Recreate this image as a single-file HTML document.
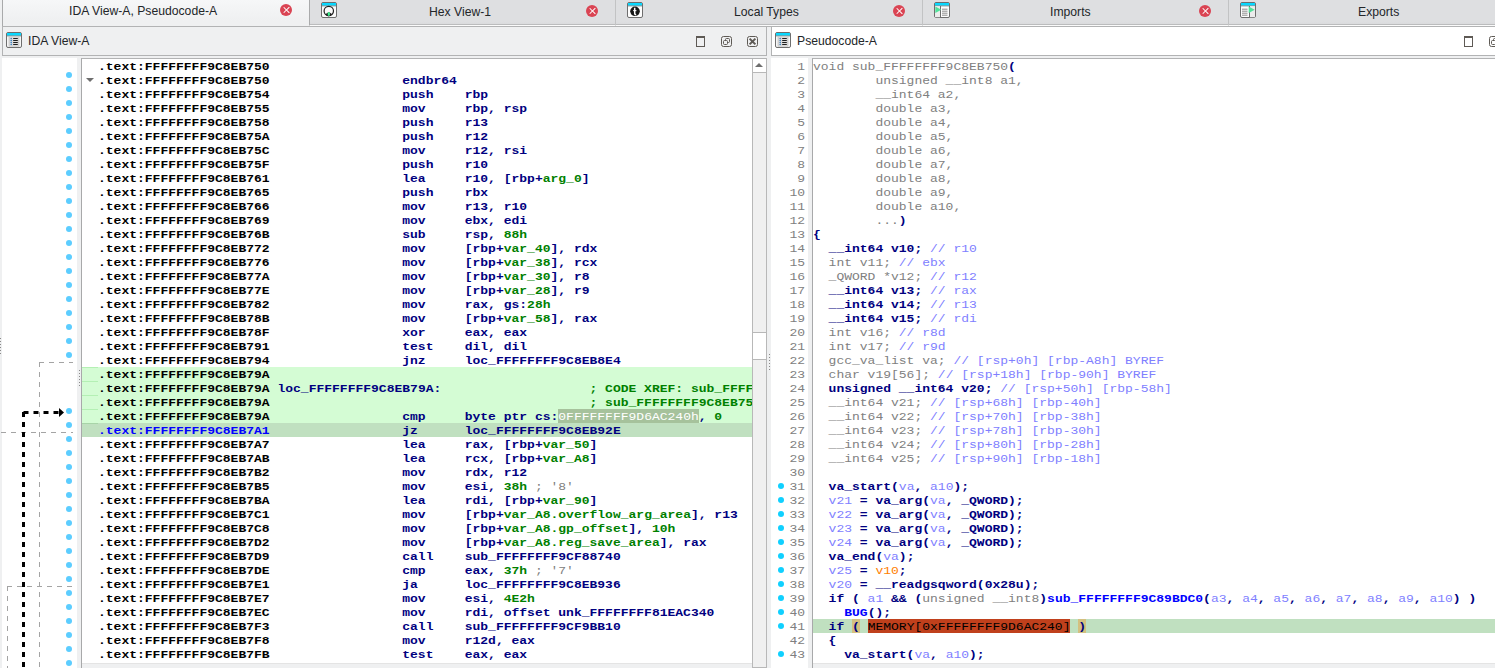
<!DOCTYPE html>
<html><head><meta charset="utf-8">
<style>
*{margin:0;padding:0;box-sizing:border-box}
html,body{width:1495px;height:668px;overflow:hidden;background:#eff0f1;position:relative;font-family:"Liberation Sans",sans-serif}
.a{position:absolute}
.tab{position:absolute;top:0;height:26px;background:linear-gradient(#dedfe1 85%,#d9dadc);border-left:1px solid #c2c3c4;border-bottom:1px solid #fbfbfb;box-shadow:inset 0 -1px 0 #bbbcbd}
.tab.act{background:linear-gradient(#f6f7f8,#eff0f1 80%);border-bottom:none;height:26px;border-left-color:#a9aaab;box-shadow:none}
.tt{position:absolute;top:3px;font-size:12.2px;color:#232629;white-space:nowrap;line-height:16px}
.cls{position:absolute;top:4px;width:12px;height:12px;border-radius:50%;background:#da4453}
.cls:before,.cls:after{content:"";position:absolute;left:5.5px;top:2px;width:1.2px;height:8px;background:#fff;transform:rotate(45deg)}
.cls:after{transform:rotate(-45deg)}
.ico{position:absolute;width:16px;height:16px}
.code{font-family:"Liberation Mono",monospace;font-size:13px;font-weight:bold;white-space:pre;line-height:14px}
.r{height:14px;white-space:pre;transform:scaleY(0.9);transform-origin:0 11px}
.hl{background:#d4fcd4}
.cur{background:#c0e0c0}
.dot{position:absolute;width:6px;height:6px;border-radius:50%}
.num{font-family:"Liberation Mono",monospace;font-size:13px;color:#808080;text-align:right;line-height:14px}
</style></head><body>

<!-- ===== TAB BAR ===== -->
<div class="a" style="left:2px;top:26px;width:1493px;height:1px;background:#b2b3b4"></div>
<div class="tab act" style="left:2px;width:307px"></div>
<div class="tt" style="left:69px">IDA View-A, Pseudocode-A</div>
<div class="cls" style="left:280px"></div>

<div class="tab" style="left:309px;width:306px;border-left-color:#a9aaab"></div>
<div class="tt" style="left:429px;top:4px">Hex View-1</div>
<div class="cls" style="left:586px;top:5px"></div>

<div class="tab" style="left:615px;width:307px"></div>
<div class="tt" style="left:734px;top:4px">Local Types</div>
<div class="cls" style="left:893px;top:5px"></div>

<div class="tab" style="left:922px;width:306px"></div>
<div class="tt" style="left:1050px;top:4px">Imports</div>
<div class="cls" style="left:1199px;top:5px"></div>

<div class="tab" style="left:1228px;width:267px"></div>
<div class="tt" style="left:1358px;top:4px">Exports</div>

<!-- tab icons -->
<svg class="ico" style="left:321px;top:2px" viewBox="0 0 16 16"><rect x="0.5" y="0.5" width="15" height="15" rx="1.5" fill="#fafafa" stroke="#6e6e6e"/><rect x="1" y="1" width="14" height="2.6" fill="#08d8ff"/><path d="M1 3.9h14" stroke="#4a6a70" stroke-width="0.7"/><circle cx="7.8" cy="9" r="4.7" fill="none" stroke="#202020" stroke-width="1.2"/><path d="M4.3 12.3 L7.8 10 L11.3 12.3 L7.8 14.6Z" fill="#202020"/><ellipse cx="7.8" cy="12" rx="1.2" ry="1.9" fill="#3ef08e"/></svg>
<svg class="ico" style="left:627px;top:2px" viewBox="0 0 16 16"><rect x="0.5" y="0.5" width="15" height="15" rx="1.5" fill="#fdfdfd" stroke="#6e6e6e"/><rect x="1" y="1" width="14" height="2.6" fill="#08d8ff"/><path d="M1 3.9h14" stroke="#4a6a70" stroke-width="0.7"/><circle cx="8" cy="9.3" r="4.8" fill="#161616"/><path d="M7.7 5.8 v5.8 q0 1.2 1.5 1.2" fill="none" stroke="#fff" stroke-width="1.5"/><path d="M6.2 8.6 h3.2" stroke="#fff" stroke-width="1.1"/></svg>
<svg class="ico" style="left:934px;top:2px" viewBox="0 0 16 16"><rect x="0.5" y="0.5" width="15" height="15" rx="1.5" fill="#fdfdfd" stroke="#6e6e6e"/><rect x="1" y="1" width="14" height="2.6" fill="#08d8ff"/><path d="M1 3.9h14" stroke="#4a6a70" stroke-width="0.7"/><rect x="1" y="4.2" width="5" height="11" fill="#ececec"/><path d="M6.5 4v11.5" stroke="#6e6e6e" stroke-width="1"/><path d="M8 7.2h5.5M8 9.2h5.5M8 11.2h5.5M8 13.2h5.5" stroke="#707070" stroke-width="0.8"/><path d="M1.3 4.6 L7.3 7.8 L1.3 11Z" fill="#50e39a"/></svg>
<svg class="ico" style="left:1240px;top:2px" viewBox="0 0 16 16"><rect x="0.5" y="0.5" width="15" height="15" rx="1.5" fill="#fdfdfd" stroke="#6e6e6e"/><rect x="1" y="1" width="14" height="2.6" fill="#08d8ff"/><path d="M1 3.9h14" stroke="#4a6a70" stroke-width="0.7"/><rect x="9.5" y="4.2" width="5.5" height="11" fill="#ececec"/><path d="M9.5 4v11.5" stroke="#6e6e6e" stroke-width="1"/><path d="M2 7.2h5.5M2 9.2h5.5M2 11.2h5.5M2 13.2h5.5" stroke="#707070" stroke-width="0.8"/><path d="M8.7 4.6 L14.7 7.8 L8.7 11Z" fill="#50e39a"/></svg>

<!-- ===== IDA VIEW PANEL ===== -->
<div class="a" style="left:2px;top:26px;width:765px;height:30px;background:#eff0f1;border:1px solid #b2b3b4"></div>
<svg class="ico" style="left:6px;top:32px" viewBox="0 0 16 16"><rect x="0.5" y="0.5" width="15" height="15" rx="1.5" fill="#f6f6f6" stroke="#6e6e6e"/><rect x="1" y="1" width="14" height="2.6" fill="#08d8ff"/><path d="M1 3.9h14" stroke="#4a6a70" stroke-width="0.7"/><rect x="2.6" y="4.3" width="10.8" height="10.4" fill="#c9c9c9"/><rect x="3.6" y="5" width="8.8" height="9" fill="#dadada"/><path d="M7.2 6.5h4.6M7.2 8.5h4.6M7.2 10.5h4.6M7.2 12.5h4.6" stroke="#1e1e1e" stroke-width="1"/><circle cx="5.2" cy="6.5" r="0.75" fill="#2878c0"/><circle cx="5.2" cy="8.5" r="0.75" fill="#2878c0"/><circle cx="5.2" cy="10.5" r="0.75" fill="#2878c0"/><circle cx="5.2" cy="12.5" r="0.75" fill="#2878c0"/></svg>
<div class="tt" style="left:28px;top:33px">IDA View-A</div>
<!-- title buttons -->
<svg class="a" style="left:695px;top:35px" width="12" height="13" viewBox="0 0 12 13"><rect x="1.5" y="1.5" width="8" height="10" fill="none" stroke="#5e5a55" stroke-width="1"/><rect x="1" y="1" width="9" height="2" fill="#5e5a55"/></svg>
<svg class="a" style="left:720px;top:35px" width="13" height="13" viewBox="0 0 13 13"><rect x="1.5" y="1.5" width="10" height="10" rx="2" fill="none" stroke="#5e5a55"/><rect x="5.5" y="3.5" width="4" height="4" rx="1" fill="none" stroke="#5e5a55"/><rect x="3.5" y="5.5" width="4" height="4" rx="1" fill="#eff0f1" stroke="#5e5a55"/></svg>
<svg class="a" style="left:746px;top:35px" width="13" height="13" viewBox="0 0 13 13"><rect x="1.5" y="1.5" width="10" height="10" rx="2" fill="none" stroke="#5e5a55"/><path d="M3.6 3.6L9.4 9.4M9.4 3.6L3.6 9.4" stroke="#5e5a55" stroke-width="2"/></svg>

<!-- left arrow panel -->
<div class="a" style="left:2px;top:58px;width:75px;height:610px;background:#fff"></div>
<div id="arrows" class="a" style="left:2px;top:58px;width:75px;height:610px">
<svg width="81" height="610" viewBox="0 58 81 610" style="position:absolute;left:-2px;top:0"><path d="M39 362.5 H73" stroke="#a4a4a4" stroke-width="1" stroke-dasharray="5 5" fill="none"/><path d="M39.5 362 V668" stroke="#a4a4a4" stroke-width="1" stroke-dasharray="5 5" fill="none"/><path d="M1 432.5 H73" stroke="#a4a4a4" stroke-width="1" stroke-dasharray="5 5" fill="none"/><path d="M7 586.5 H72" stroke="#a4a4a4" stroke-width="1" stroke-dasharray="5 5" fill="none"/><path d="M7.5 586 V668" stroke="#a4a4a4" stroke-width="1" stroke-dasharray="5 5" fill="none"/><path d="M23.5 412 V668" stroke="#000" stroke-width="3" stroke-dasharray="5 5" fill="none"/><path d="M58.5 412.5 H22" stroke="#000" stroke-width="3" stroke-dasharray="5 5" fill="none"/><path d="M59 408 L64 412.5 L59 417Z" fill="#000"/><circle cx="69" cy="75" r="3" fill="#5ccdff"/><circle cx="69" cy="89" r="3" fill="#5ccdff"/><circle cx="69" cy="103" r="3" fill="#5ccdff"/><circle cx="69" cy="117" r="3" fill="#5ccdff"/><circle cx="69" cy="131" r="3" fill="#5ccdff"/><circle cx="69" cy="145" r="3" fill="#5ccdff"/><circle cx="69" cy="159" r="3" fill="#5ccdff"/><circle cx="69" cy="173" r="3" fill="#5ccdff"/><circle cx="69" cy="187" r="3" fill="#5ccdff"/><circle cx="69" cy="201" r="3" fill="#5ccdff"/><circle cx="69" cy="215" r="3" fill="#5ccdff"/><circle cx="69" cy="229" r="3" fill="#5ccdff"/><circle cx="69" cy="243" r="3" fill="#5ccdff"/><circle cx="69" cy="257" r="3" fill="#5ccdff"/><circle cx="69" cy="271" r="3" fill="#5ccdff"/><circle cx="69" cy="285" r="3" fill="#5ccdff"/><circle cx="69" cy="299" r="3" fill="#5ccdff"/><circle cx="69" cy="313" r="3" fill="#5ccdff"/><circle cx="69" cy="327" r="3" fill="#5ccdff"/><circle cx="69" cy="341" r="3" fill="#5ccdff"/><circle cx="69" cy="355" r="3" fill="#5ccdff"/><circle cx="69" cy="411" r="3" fill="#5ccdff"/><circle cx="69" cy="425" r="3" fill="#5ccdff"/><circle cx="69" cy="439" r="3" fill="#5ccdff"/><circle cx="69" cy="453" r="3" fill="#5ccdff"/><circle cx="69" cy="467" r="3" fill="#5ccdff"/><circle cx="69" cy="481" r="3" fill="#5ccdff"/><circle cx="69" cy="495" r="3" fill="#5ccdff"/><circle cx="69" cy="509" r="3" fill="#5ccdff"/><circle cx="69" cy="523" r="3" fill="#5ccdff"/><circle cx="69" cy="537" r="3" fill="#5ccdff"/><circle cx="69" cy="551" r="3" fill="#5ccdff"/><circle cx="69" cy="565" r="3" fill="#5ccdff"/><circle cx="69" cy="579" r="3" fill="#5ccdff"/><circle cx="69" cy="593" r="3" fill="#5ccdff"/><circle cx="69" cy="607" r="3" fill="#5ccdff"/><circle cx="69" cy="621" r="3" fill="#5ccdff"/><circle cx="69" cy="635" r="3" fill="#5ccdff"/><circle cx="69" cy="649" r="3" fill="#5ccdff"/><circle cx="69" cy="663" r="3" fill="#5ccdff"/></svg>
</div>
<!-- code frame -->
<div class="a" style="left:81px;top:58px;width:686px;height:610px;border-left:1px solid #a8a9aa;border-top:1px solid #b2b3b4;background:#fff"></div>
<div class="a code" style="left:82px;top:59px;width:670px;height:604px;overflow:hidden;background:#fff">
  <div class="a hl" style="left:0;top:308px;width:670px;height:56px"></div>
  <div class="a cur" style="left:0;top:364px;width:670px;height:14px"></div><div class="a" style="left:0;top:308px;width:16px;height:1px;background:#b4f0b4"></div><div class="a" style="left:0;top:322px;width:16px;height:1px;background:#b4f0b4"></div><div class="a" style="left:0;top:336px;width:16px;height:1px;background:#b4f0b4"></div><div class="a" style="left:0;top:350px;width:16px;height:1px;background:#b4f0b4"></div><div class="a" style="left:0;top:364px;width:16px;height:1px;background:#a8d4a8"></div>
  <div class="a" style="left:4px;top:19px;width:0;height:0;border-left:4px solid transparent;border-right:4px solid transparent;border-top:4px solid #6e6e6e"></div>
  <div class="a" style="left:476.2px;top:350px;width:140.4px;height:14px;background:#a6c29c"></div>
  <div class="a" style="left:16px;top:1px"><div class="r"><span style="color:#000000;">.text:FFFFFFFF9C8EB750</span></div><div class="r"><span style="color:#000000;">.text:FFFFFFFF9C8EB750</span>                 <span style="color:#000080;">endbr64 </span></div><div class="r"><span style="color:#000000;">.text:FFFFFFFF9C8EB754</span>                 <span style="color:#000080;">push    </span><span style="color:#000080;">rbp</span></div><div class="r"><span style="color:#000000;">.text:FFFFFFFF9C8EB755</span>                 <span style="color:#000080;">mov     </span><span style="color:#000080;">rbp, rsp</span></div><div class="r"><span style="color:#000000;">.text:FFFFFFFF9C8EB758</span>                 <span style="color:#000080;">push    </span><span style="color:#000080;">r13</span></div><div class="r"><span style="color:#000000;">.text:FFFFFFFF9C8EB75A</span>                 <span style="color:#000080;">push    </span><span style="color:#000080;">r12</span></div><div class="r"><span style="color:#000000;">.text:FFFFFFFF9C8EB75C</span>                 <span style="color:#000080;">mov     </span><span style="color:#000080;">r12, rsi</span></div><div class="r"><span style="color:#000000;">.text:FFFFFFFF9C8EB75F</span>                 <span style="color:#000080;">push    </span><span style="color:#000080;">r10</span></div><div class="r"><span style="color:#000000;">.text:FFFFFFFF9C8EB761</span>                 <span style="color:#000080;">lea     </span><span style="color:#000080;">r10, [rbp+</span><span style="color:#008000;">arg_0</span><span style="color:#000080;">]</span></div><div class="r"><span style="color:#000000;">.text:FFFFFFFF9C8EB765</span>                 <span style="color:#000080;">push    </span><span style="color:#000080;">rbx</span></div><div class="r"><span style="color:#000000;">.text:FFFFFFFF9C8EB766</span>                 <span style="color:#000080;">mov     </span><span style="color:#000080;">r13, r10</span></div><div class="r"><span style="color:#000000;">.text:FFFFFFFF9C8EB769</span>                 <span style="color:#000080;">mov     </span><span style="color:#000080;">ebx, edi</span></div><div class="r"><span style="color:#000000;">.text:FFFFFFFF9C8EB76B</span>                 <span style="color:#000080;">sub     </span><span style="color:#000080;">rsp, </span><span style="color:#008000;">88h</span></div><div class="r"><span style="color:#000000;">.text:FFFFFFFF9C8EB772</span>                 <span style="color:#000080;">mov     </span><span style="color:#000080;">[rbp+</span><span style="color:#008000;">var_40</span><span style="color:#000080;">], rdx</span></div><div class="r"><span style="color:#000000;">.text:FFFFFFFF9C8EB776</span>                 <span style="color:#000080;">mov     </span><span style="color:#000080;">[rbp+</span><span style="color:#008000;">var_38</span><span style="color:#000080;">], rcx</span></div><div class="r"><span style="color:#000000;">.text:FFFFFFFF9C8EB77A</span>                 <span style="color:#000080;">mov     </span><span style="color:#000080;">[rbp+</span><span style="color:#008000;">var_30</span><span style="color:#000080;">], r8</span></div><div class="r"><span style="color:#000000;">.text:FFFFFFFF9C8EB77E</span>                 <span style="color:#000080;">mov     </span><span style="color:#000080;">[rbp+</span><span style="color:#008000;">var_28</span><span style="color:#000080;">], r9</span></div><div class="r"><span style="color:#000000;">.text:FFFFFFFF9C8EB782</span>                 <span style="color:#000080;">mov     </span><span style="color:#000080;">rax, gs:</span><span style="color:#008000;">28h</span></div><div class="r"><span style="color:#000000;">.text:FFFFFFFF9C8EB78B</span>                 <span style="color:#000080;">mov     </span><span style="color:#000080;">[rbp+</span><span style="color:#008000;">var_58</span><span style="color:#000080;">], rax</span></div><div class="r"><span style="color:#000000;">.text:FFFFFFFF9C8EB78F</span>                 <span style="color:#000080;">xor     </span><span style="color:#000080;">eax, eax</span></div><div class="r"><span style="color:#000000;">.text:FFFFFFFF9C8EB791</span>                 <span style="color:#000080;">test    </span><span style="color:#000080;">dil, dil</span></div><div class="r"><span style="color:#000000;">.text:FFFFFFFF9C8EB794</span>                 <span style="color:#000080;">jnz     </span><span style="color:#000080;">loc_FFFFFFFF9C8EB8E4</span></div><div class="r"><span style="color:#000000;">.text:FFFFFFFF9C8EB79A</span></div><div class="r"><span style="color:#000000;">.text:FFFFFFFF9C8EB79A</span> <span style="color:#000080;">loc_FFFFFFFF9C8EB79A:</span>                   <span style="color:#008000;">; CODE XREF: sub_FFFFFFFF9C8EB750+44</span></div><div class="r"><span style="color:#000000;">.text:FFFFFFFF9C8EB79A</span>                                         <span style="color:#008000;">; sub_FFFFFFFF9C8EB750+196</span></div><div class="r"><span style="color:#000000;">.text:FFFFFFFF9C8EB79A</span>                 <span style="color:#000080;">cmp     </span><span style="color:#000080;">byte ptr cs:</span><span style="color:#ffffff;font-weight:normal;">0FFFFFFFF9D6AC240h</span><span style="color:#000080;">, </span><span style="color:#008000;">0</span></div><div class="r"><span style="color:#0000ff;">.text:FFFFFFFF9C8EB7A1</span>                 <span style="color:#000080;">jz      </span><span style="color:#000080;">loc_FFFFFFFF9C8EB92E</span></div><div class="r"><span style="color:#000000;">.text:FFFFFFFF9C8EB7A7</span>                 <span style="color:#000080;">lea     </span><span style="color:#000080;">rax, [rbp+</span><span style="color:#008000;">var_50</span><span style="color:#000080;">]</span></div><div class="r"><span style="color:#000000;">.text:FFFFFFFF9C8EB7AB</span>                 <span style="color:#000080;">lea     </span><span style="color:#000080;">rcx, [rbp+</span><span style="color:#008000;">var_A8</span><span style="color:#000080;">]</span></div><div class="r"><span style="color:#000000;">.text:FFFFFFFF9C8EB7B2</span>                 <span style="color:#000080;">mov     </span><span style="color:#000080;">rdx, r12</span></div><div class="r"><span style="color:#000000;">.text:FFFFFFFF9C8EB7B5</span>                 <span style="color:#000080;">mov     </span><span style="color:#000080;">esi, </span><span style="color:#008000;">38h</span><span style="color:#808080;font-weight:normal;"> ; &#x27;8&#x27;</span></div><div class="r"><span style="color:#000000;">.text:FFFFFFFF9C8EB7BA</span>                 <span style="color:#000080;">lea     </span><span style="color:#000080;">rdi, [rbp+</span><span style="color:#008000;">var_90</span><span style="color:#000080;">]</span></div><div class="r"><span style="color:#000000;">.text:FFFFFFFF9C8EB7C1</span>                 <span style="color:#000080;">mov     </span><span style="color:#000080;">[rbp+</span><span style="color:#008000;">var_A8.overflow_arg_area</span><span style="color:#000080;">], r13</span></div><div class="r"><span style="color:#000000;">.text:FFFFFFFF9C8EB7C8</span>                 <span style="color:#000080;">mov     </span><span style="color:#000080;">[rbp+</span><span style="color:#008000;">var_A8.gp_offset</span><span style="color:#000080;">], </span><span style="color:#008000;">10h</span></div><div class="r"><span style="color:#000000;">.text:FFFFFFFF9C8EB7D2</span>                 <span style="color:#000080;">mov     </span><span style="color:#000080;">[rbp+</span><span style="color:#008000;">var_A8.reg_save_area</span><span style="color:#000080;">], rax</span></div><div class="r"><span style="color:#000000;">.text:FFFFFFFF9C8EB7D9</span>                 <span style="color:#000080;">call    </span><span style="color:#000080;">sub_FFFFFFFF9CF88740</span></div><div class="r"><span style="color:#000000;">.text:FFFFFFFF9C8EB7DE</span>                 <span style="color:#000080;">cmp     </span><span style="color:#000080;">eax, </span><span style="color:#008000;">37h</span><span style="color:#808080;font-weight:normal;"> ; &#x27;7&#x27;</span></div><div class="r"><span style="color:#000000;">.text:FFFFFFFF9C8EB7E1</span>                 <span style="color:#000080;">ja      </span><span style="color:#000080;">loc_FFFFFFFF9C8EB936</span></div><div class="r"><span style="color:#000000;">.text:FFFFFFFF9C8EB7E7</span>                 <span style="color:#000080;">mov     </span><span style="color:#000080;">esi, </span><span style="color:#008000;">4E2h</span></div><div class="r"><span style="color:#000000;">.text:FFFFFFFF9C8EB7EC</span>                 <span style="color:#000080;">mov     </span><span style="color:#000080;">rdi, offset unk_FFFFFFFF81EAC340</span></div><div class="r"><span style="color:#000000;">.text:FFFFFFFF9C8EB7F3</span>                 <span style="color:#000080;">call    </span><span style="color:#000080;">sub_FFFFFFFF9CF9BB10</span></div><div class="r"><span style="color:#000000;">.text:FFFFFFFF9C8EB7F8</span>                 <span style="color:#000080;">mov     </span><span style="color:#000080;">r12d, eax</span></div><div class="r"><span style="color:#000000;">.text:FFFFFFFF9C8EB7FB</span>                 <span style="color:#000080;">test    </span><span style="color:#000080;">eax, eax</span></div><div class="r"><span style="color:#000000;">.text:FFFFFFFF9C8EB7FF</span>                 <span style="color:#000080;">jz      </span><span style="color:#000080;">loc_FFFFFFFF9C8EB8D0</span></div></div>
</div>
<!-- IDA scrollbars -->
<div class="a" style="left:752px;top:59px;width:15px;height:609px;background:#f0f0f0;border-left:1px solid #b8b8b8;border-right:1px solid #b8b8b8;border-bottom:1px solid #b8b8b8"></div>
<div class="a" style="left:752px;top:59px;width:15px;height:14px;background:#fff;border:1px solid #b8b8b8;border-top:none"></div>
<div class="a" style="left:755px;top:63px;width:0;height:0;border-left:4px solid transparent;border-right:4px solid transparent;border-bottom:4px solid #6e6e6e"></div>
<div class="a" style="left:752px;top:332px;width:15px;height:28px;background:#fff;border:1px solid #b8b8b8"></div>
<div class="a" style="left:82px;top:663px;width:670px;height:5px;background:#eff0f1;border-top:1px solid #e4e4e4"></div>

<!-- ===== PSEUDOCODE PANEL ===== -->
<div class="a" style="left:771px;top:26px;width:730px;height:30px;background:#fff;border:1px solid #b2b3b4"></div>
<svg class="ico" style="left:775px;top:32px" viewBox="0 0 16 16"><rect x="0.5" y="0.5" width="15" height="15" rx="1.5" fill="#f6f6f6" stroke="#6e6e6e"/><rect x="1" y="1" width="14" height="2.6" fill="#08d8ff"/><path d="M1 3.9h14" stroke="#4a6a70" stroke-width="0.7"/><rect x="2.6" y="4.3" width="10.8" height="10.4" fill="#c9c9c9"/><rect x="3.6" y="5" width="8.8" height="9" fill="#dadada"/><path d="M7.2 6.5h4.6M7.2 8.5h4.6M7.2 10.5h4.6M7.2 12.5h4.6" stroke="#1e1e1e" stroke-width="1"/><circle cx="5.2" cy="6.5" r="0.75" fill="#2878c0"/><circle cx="5.2" cy="8.5" r="0.75" fill="#2878c0"/><circle cx="5.2" cy="10.5" r="0.75" fill="#2878c0"/><circle cx="5.2" cy="12.5" r="0.75" fill="#2878c0"/></svg>
<div class="tt" style="left:797px;top:33px">Pseudocode-A</div>
<svg class="a" style="left:1463px;top:35px" width="12" height="13" viewBox="0 0 12 13"><rect x="1.5" y="1.5" width="8" height="10" fill="none" stroke="#5e5a55" stroke-width="1"/><rect x="1" y="1" width="9" height="2" fill="#5e5a55"/></svg>
<svg class="a" style="left:1488px;top:35px" width="13" height="13" viewBox="0 0 13 13"><rect x="1.5" y="1.5" width="10" height="10" rx="2" fill="none" stroke="#5e5a55"/><rect x="5.5" y="3.5" width="4" height="4" rx="1" fill="none" stroke="#5e5a55"/><rect x="3.5" y="5.5" width="4" height="4" rx="1" fill="#fff" stroke="#5e5a55"/></svg>

<div class="a" style="left:766px;top:58px;width:1px;height:610px;background:#b8b8b8"></div>
<div class="a" style="left:771px;top:58px;width:37px;height:610px;background:#fff"></div>
<div class="a num" style="left:771px;top:60px;width:34px"><div class="r">1</div><div class="r">2</div><div class="r">3</div><div class="r">4</div><div class="r">5</div><div class="r">6</div><div class="r">7</div><div class="r">8</div><div class="r">9</div><div class="r">10</div><div class="r">11</div><div class="r">12</div><div class="r">13</div><div class="r">14</div><div class="r">15</div><div class="r">16</div><div class="r">17</div><div class="r">18</div><div class="r">19</div><div class="r">20</div><div class="r">21</div><div class="r">22</div><div class="r">23</div><div class="r">24</div><div class="r">25</div><div class="r">26</div><div class="r">27</div><div class="r">28</div><div class="r">29</div><div class="r">30</div><div class="r">31</div><div class="r">32</div><div class="r">33</div><div class="r">34</div><div class="r">35</div><div class="r">36</div><div class="r">37</div><div class="r">38</div><div class="r">39</div><div class="r">40</div><div class="r">41</div><div class="r">42</div><div class="r">43</div></div>
<div id="pdots"><div class="dot" style="left:778px;top:483px;background:#10d0ff"></div><div class="dot" style="left:778px;top:497px;background:#10d0ff"></div><div class="dot" style="left:778px;top:511px;background:#10d0ff"></div><div class="dot" style="left:778px;top:525px;background:#10d0ff"></div><div class="dot" style="left:778px;top:539px;background:#10d0ff"></div><div class="dot" style="left:778px;top:553px;background:#10d0ff"></div><div class="dot" style="left:778px;top:567px;background:#10d0ff"></div><div class="dot" style="left:778px;top:581px;background:#10d0ff"></div><div class="dot" style="left:778px;top:595px;background:#10d0ff"></div><div class="dot" style="left:778px;top:609px;background:#10d0ff"></div><div class="dot" style="left:778px;top:623px;background:#10d0ff"></div><div class="dot" style="left:778px;top:651px;background:#10d0ff"></div></div>
<div class="a" style="left:812px;top:58px;width:690px;height:610px;border-left:1px solid #a8a9aa;border-top:1px solid #b2b3b4;background:#fff"></div>
<div class="a code" style="left:813px;top:59px;width:690px;height:604px;overflow:hidden;background:#fff">
  <div class="a cur" style="left:0;top:560px;width:690px;height:14px"></div>
  <div class="a" style="left:39px;top:560px;width:7.8px;height:14px;background:#d4c080"></div><div class="a" style="left:54.6px;top:560px;width:202.8px;height:14px;background:#c0401c"></div><div class="a" style="left:265.2px;top:560px;width:7.8px;height:14px;background:#d4c080"></div>
  <div class="a" style="left:0;top:1px"><div class="r"><span style="color:#808080;font-weight:normal;">void sub_FFFFFFFF9C8EB750</span><span style="color:#000080;">(</span></div><div class="r"><span style="color:#808080;font-weight:normal;">        unsigned __int8 a1,</span></div><div class="r"><span style="color:#808080;font-weight:normal;">        __int64 a2,</span></div><div class="r"><span style="color:#808080;font-weight:normal;">        double a3,</span></div><div class="r"><span style="color:#808080;font-weight:normal;">        double a4,</span></div><div class="r"><span style="color:#808080;font-weight:normal;">        double a5,</span></div><div class="r"><span style="color:#808080;font-weight:normal;">        double a6,</span></div><div class="r"><span style="color:#808080;font-weight:normal;">        double a7,</span></div><div class="r"><span style="color:#808080;font-weight:normal;">        double a8,</span></div><div class="r"><span style="color:#808080;font-weight:normal;">        double a9,</span></div><div class="r"><span style="color:#808080;font-weight:normal;">        double a10,</span></div><div class="r"><span style="color:#808080;font-weight:normal;">        ...</span><span style="color:#000080;">)</span></div><div class="r"><span style="color:#000080;">{</span></div><div class="r"><span style="color:#000080;">  __int64 v10;</span><span style="color:#8080ff;font-weight:normal;"> // r10</span></div><div class="r"><span style="color:#808080;font-weight:normal;">  int v11;</span><span style="color:#8080ff;font-weight:normal;"> // ebx</span></div><div class="r"><span style="color:#808080;font-weight:normal;">  _QWORD *v12;</span><span style="color:#8080ff;font-weight:normal;"> // r12</span></div><div class="r"><span style="color:#000080;">  __int64 v13;</span><span style="color:#8080ff;font-weight:normal;"> // rax</span></div><div class="r"><span style="color:#000080;">  __int64 v14;</span><span style="color:#8080ff;font-weight:normal;"> // r13</span></div><div class="r"><span style="color:#000080;">  __int64 v15;</span><span style="color:#8080ff;font-weight:normal;"> // rdi</span></div><div class="r"><span style="color:#808080;font-weight:normal;">  int v16;</span><span style="color:#8080ff;font-weight:normal;"> // r8d</span></div><div class="r"><span style="color:#808080;font-weight:normal;">  int v17;</span><span style="color:#8080ff;font-weight:normal;"> // r9d</span></div><div class="r"><span style="color:#808080;font-weight:normal;">  gcc_va_list va;</span><span style="color:#8080ff;font-weight:normal;"> // [rsp+0h] [rbp-A8h] BYREF</span></div><div class="r"><span style="color:#808080;font-weight:normal;">  char v19[56];</span><span style="color:#8080ff;font-weight:normal;"> // [rsp+18h] [rbp-90h] BYREF</span></div><div class="r"><span style="color:#000080;">  unsigned __int64 v20;</span><span style="color:#8080ff;font-weight:normal;"> // [rsp+50h] [rbp-58h]</span></div><div class="r"><span style="color:#808080;font-weight:normal;">  __int64 v21;</span><span style="color:#8080ff;font-weight:normal;"> // [rsp+68h] [rbp-40h]</span></div><div class="r"><span style="color:#808080;font-weight:normal;">  __int64 v22;</span><span style="color:#8080ff;font-weight:normal;"> // [rsp+70h] [rbp-38h]</span></div><div class="r"><span style="color:#808080;font-weight:normal;">  __int64 v23;</span><span style="color:#8080ff;font-weight:normal;"> // [rsp+78h] [rbp-30h]</span></div><div class="r"><span style="color:#808080;font-weight:normal;">  __int64 v24;</span><span style="color:#8080ff;font-weight:normal;"> // [rsp+80h] [rbp-28h]</span></div><div class="r"><span style="color:#808080;font-weight:normal;">  __int64 v25;</span><span style="color:#8080ff;font-weight:normal;"> // [rsp+90h] [rbp-18h]</span></div><div class="r"></div><div class="r"><span style="color:#000080;">  va_start(</span><span style="color:#8080ff;font-weight:normal;">va</span><span style="color:#000080;">, </span><span style="color:#8080ff;font-weight:normal;">a10</span><span style="color:#000080;">);</span></div><div class="r">  <span style="color:#8080ff;font-weight:normal;">v21</span><span style="color:#000080;"> = va_arg(</span><span style="color:#8080ff;font-weight:normal;">va</span><span style="color:#000080;">, _QWORD);</span></div><div class="r">  <span style="color:#8080ff;font-weight:normal;">v22</span><span style="color:#000080;"> = va_arg(</span><span style="color:#8080ff;font-weight:normal;">va</span><span style="color:#000080;">, _QWORD);</span></div><div class="r">  <span style="color:#8080ff;font-weight:normal;">v23</span><span style="color:#000080;"> = va_arg(</span><span style="color:#8080ff;font-weight:normal;">va</span><span style="color:#000080;">, _QWORD);</span></div><div class="r">  <span style="color:#8080ff;font-weight:normal;">v24</span><span style="color:#000080;"> = va_arg(</span><span style="color:#8080ff;font-weight:normal;">va</span><span style="color:#000080;">, _QWORD);</span></div><div class="r"><span style="color:#000080;">  va_end(</span><span style="color:#8080ff;font-weight:normal;">va</span><span style="color:#000080;">);</span></div><div class="r">  <span style="color:#8080ff;font-weight:normal;">v25</span><span style="color:#000080;"> = </span><span style="color:#ff8000;font-weight:normal;">v10</span><span style="color:#000080;">;</span></div><div class="r">  <span style="color:#8080ff;font-weight:normal;">v20</span><span style="color:#000080;"> = __readgsqword(0x28u);</span></div><div class="r"><span style="color:#000080;">  if ( </span><span style="color:#8080ff;font-weight:normal;">a1</span><span style="color:#000080;"> &amp;&amp; (</span><span style="color:#808080;font-weight:normal;">unsigned __int8</span><span style="color:#000080;">)</span><span style="color:#0000ff;">sub_FFFFFFFF9C89BDC0</span><span style="color:#000080;">(</span><span style="color:#8080ff;font-weight:normal;">a3</span><span style="color:#000080;">, </span><span style="color:#8080ff;font-weight:normal;">a4</span><span style="color:#000080;">, </span><span style="color:#8080ff;font-weight:normal;">a5</span><span style="color:#000080;">, </span><span style="color:#8080ff;font-weight:normal;">a6</span><span style="color:#000080;">, </span><span style="color:#8080ff;font-weight:normal;">a7</span><span style="color:#000080;">, </span><span style="color:#8080ff;font-weight:normal;">a8</span><span style="color:#000080;">, </span><span style="color:#8080ff;font-weight:normal;">a9</span><span style="color:#000080;">, </span><span style="color:#8080ff;font-weight:normal;">a10</span><span style="color:#000080;">) )</span></div><div class="r">    <span style="color:#0000ff;">BUG</span><span style="color:#000080;">();</span></div><div class="r"><span style="color:#000080;">  if </span><span style="color:#000080;">(</span> <span style="color:#000000;font-weight:normal;">MEMORY[0xFFFFFFFF9D6AC240]</span> <span style="color:#000080;">)</span></div><div class="r"><span style="color:#000080;">  {</span></div><div class="r"><span style="color:#000080;">    va_start(</span><span style="color:#8080ff;font-weight:normal;">va</span><span style="color:#000080;">, </span><span style="color:#8080ff;font-weight:normal;">a10</span><span style="color:#000080;">);</span></div></div>
</div>
<div class="a" style="left:813px;top:663px;width:690px;height:5px;background:#eff0f1;border-top:1px solid #e4e4e4"></div>

<div class="a" style="left:0px;top:338px;width:1px;height:1px;background:#8a8a8a"></div><div class="a" style="left:0px;top:341px;width:1px;height:1px;background:#8a8a8a"></div><div class="a" style="left:0px;top:344px;width:1px;height:1px;background:#8a8a8a"></div><div class="a" style="left:0px;top:347px;width:1px;height:1px;background:#8a8a8a"></div><div class="a" style="left:0px;top:350px;width:1px;height:1px;background:#8a8a8a"></div><div class="a" style="left:0px;top:353px;width:1px;height:1px;background:#8a8a8a"></div><div class="a" style="left:79px;top:370px;width:1px;height:1px;background:#8a8a8a"></div><div class="a" style="left:79px;top:373px;width:1px;height:1px;background:#8a8a8a"></div><div class="a" style="left:79px;top:376px;width:1px;height:1px;background:#8a8a8a"></div><div class="a" style="left:79px;top:379px;width:1px;height:1px;background:#8a8a8a"></div><div class="a" style="left:79px;top:382px;width:1px;height:1px;background:#8a8a8a"></div><div class="a" style="left:79px;top:385px;width:1px;height:1px;background:#8a8a8a"></div><div class="a" style="left:769px;top:354px;width:1px;height:1px;background:#8a8a8a"></div><div class="a" style="left:769px;top:357px;width:1px;height:1px;background:#8a8a8a"></div><div class="a" style="left:769px;top:360px;width:1px;height:1px;background:#8a8a8a"></div><div class="a" style="left:769px;top:363px;width:1px;height:1px;background:#8a8a8a"></div><div class="a" style="left:769px;top:366px;width:1px;height:1px;background:#8a8a8a"></div><div class="a" style="left:769px;top:369px;width:1px;height:1px;background:#8a8a8a"></div>
</body></html>
